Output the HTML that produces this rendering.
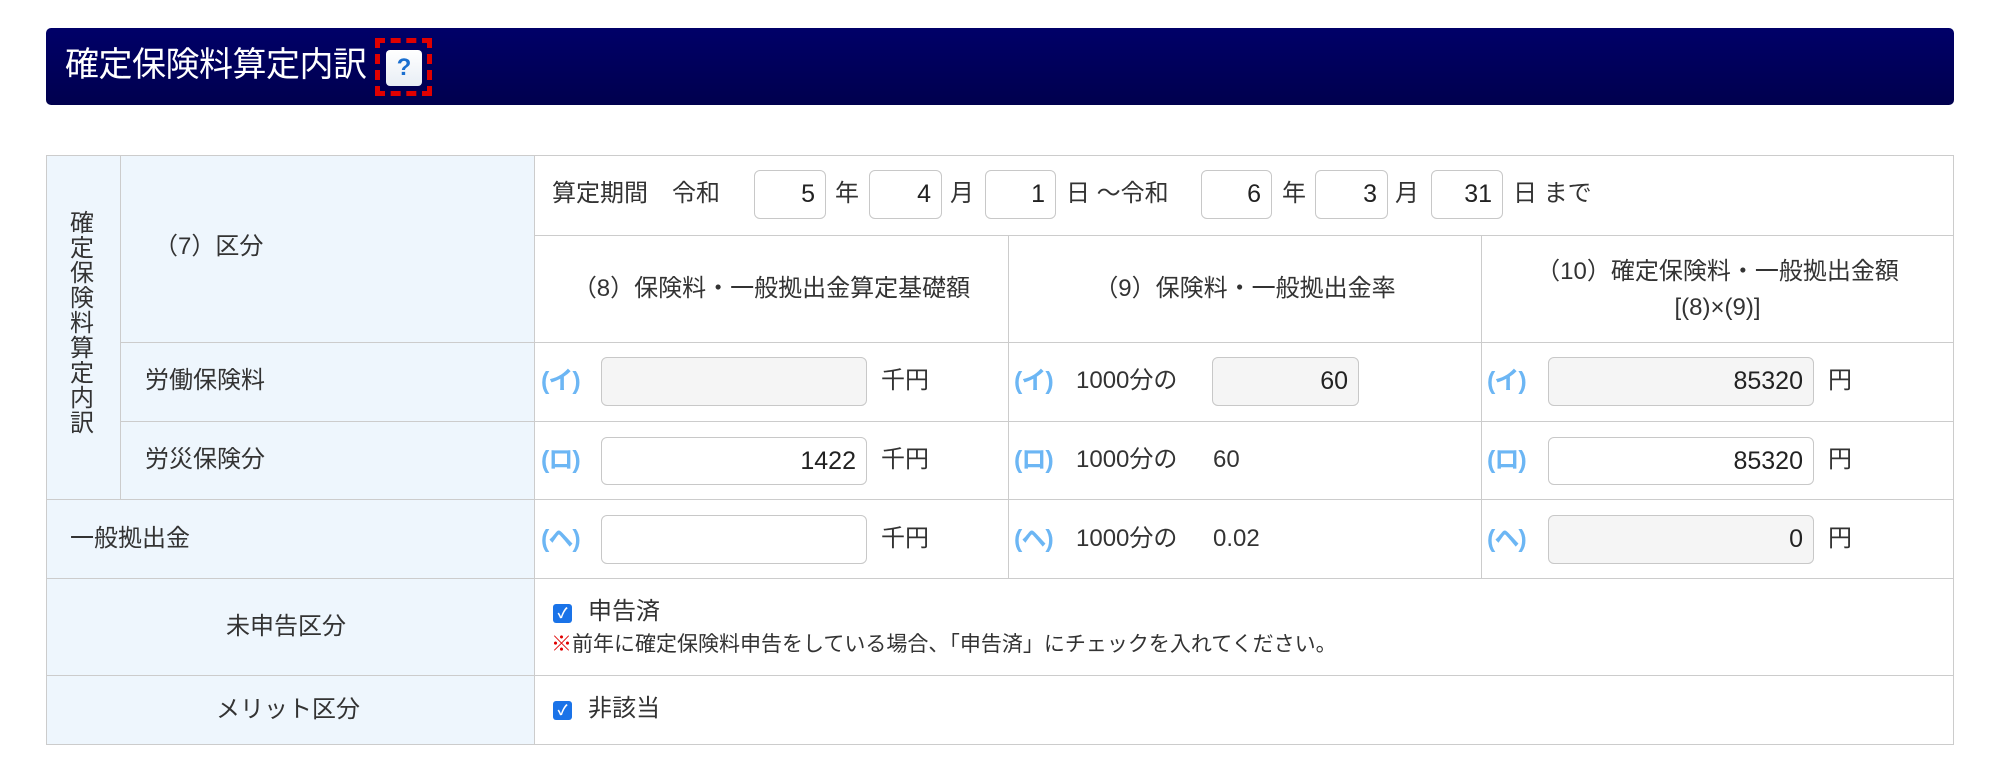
<!DOCTYPE html>
<html><head><meta charset="utf-8"><style>
*{box-sizing:border-box;margin:0;padding:0}
body{width:2000px;height:776px;background:#fff;font-family:"Liberation Sans","Noto Sans CJK JP",sans-serif;color:#333;position:relative;overflow:hidden;font-size:24px}
.a{position:absolute;white-space:nowrap;line-height:28px}
.hd{left:46px;top:28px;width:1908px;height:77px;border-radius:5px;background:linear-gradient(#000068,#00004e)}
.hd .t{position:absolute;left:19px;top:17px;color:#fff;font-size:34px;line-height:40px;letter-spacing:-0.5px}
.q{left:375px;top:38px;width:57px;height:58px;border:5px dashed #e00000}
.qi{left:386px;top:50px;width:36px;height:36px;background:linear-gradient(#fff,#e8eef5);border-radius:4px;color:#1a6fd0;font-weight:bold;font-size:24px;text-align:center;line-height:36px}
.c{position:absolute;border:1px solid #ccc}
.lb{background:#eef6fd}
.in{position:absolute;border:1px solid #c8c8c8;border-radius:6px;background:#fff;text-align:right;padding-right:10px;font-size:25px;line-height:47px;color:#222}
.g{background:#f5f5f5}
.m{position:absolute;color:#6cb6f4;font-size:25px;line-height:28px;font-weight:bold;letter-spacing:-1px}
.cb{position:absolute;width:19px;height:19px;background:#1a73e8;border-radius:3px;color:#fff;font-size:14px;line-height:19px;text-align:center;font-weight:bold}
</style></head><body>
<div class="a hd"><div class="t">確定保険料算定内訳</div></div>
<div class="a q"></div><div class="a qi">?</div>

<div class="c lb" style="left:46px;top:155px;width:75px;height:345px"></div>
<div class="c lb" style="left:120px;top:155px;width:415px;height:188px"></div>
<div class="c lb" style="left:120px;top:342px;width:415px;height:80px"></div>
<div class="c lb" style="left:120px;top:421px;width:415px;height:79px"></div>
<div class="c lb" style="left:46px;top:499px;width:489px;height:80px"></div>
<div class="c lb" style="left:46px;top:578px;width:489px;height:98px"></div>
<div class="c lb" style="left:46px;top:675px;width:489px;height:70px"></div>
<div class="c" style="left:534px;top:155px;width:1420px;height:81px"></div>
<div class="c" style="left:534px;top:235px;width:475px;height:108px"></div>
<div class="c" style="left:1008px;top:235px;width:474px;height:108px"></div>
<div class="c" style="left:1481px;top:235px;width:473px;height:108px"></div>
<div class="c" style="left:534px;top:342px;width:475px;height:80px"></div>
<div class="c" style="left:1008px;top:342px;width:474px;height:80px"></div>
<div class="c" style="left:1481px;top:342px;width:473px;height:80px"></div>
<div class="c" style="left:534px;top:421px;width:475px;height:79px"></div>
<div class="c" style="left:1008px;top:421px;width:474px;height:79px"></div>
<div class="c" style="left:1481px;top:421px;width:473px;height:79px"></div>
<div class="c" style="left:534px;top:499px;width:475px;height:80px"></div>
<div class="c" style="left:1008px;top:499px;width:474px;height:80px"></div>
<div class="c" style="left:1481px;top:499px;width:473px;height:80px"></div>
<div class="c" style="left:534px;top:578px;width:1420px;height:98px"></div>
<div class="c" style="left:534px;top:675px;width:1420px;height:70px"></div>

<div class="a" style="left:70px;top:211px;width:26px;font-size:24px;line-height:25px;white-space:normal">確定保険料算定内訳</div>
<div class="a" style="left:154px;top:233px">（7）区分</div>
<div class="a" style="left:145px;top:367px">労働保険料</div>
<div class="a" style="left:145px;top:446px">労災保険分</div>
<div class="a" style="left:70px;top:525px">一般拠出金</div>
<div class="a" style="left:226px;top:613px">未申告区分</div>
<div class="a" style="left:216px;top:696px">メリット区分</div>

<div class="a" style="left:552px;top:180px">算定期間　令和</div>
<div class="in" style="left:754px;top:170px;width:72px;height:49px">5</div>
<div class="a" style="left:835px;top:180px">年</div>
<div class="in" style="left:869px;top:170px;width:73px;height:49px">4</div>
<div class="a" style="left:950px;top:180px">月</div>
<div class="in" style="left:985px;top:170px;width:71px;height:49px">1</div>
<div class="a" style="left:1066px;top:180px">日 ～令和</div>
<div class="in" style="left:1201px;top:170px;width:71px;height:49px">6</div>
<div class="a" style="left:1282px;top:180px">年</div>
<div class="in" style="left:1315px;top:170px;width:73px;height:49px">3</div>
<div class="a" style="left:1395px;top:180px">月</div>
<div class="in" style="left:1431px;top:170px;width:72px;height:49px">31</div>
<div class="a" style="left:1513px;top:180px">日 まで</div>

<div class="a" style="left:534px;top:275px;width:475px;text-align:center">（8）保険料・一般拠出金算定基礎額</div>
<div class="a" style="left:1008px;top:275px;width:474px;text-align:center">（9）保険料・一般拠出金率</div>
<div class="a" style="left:1481px;top:254px;width:473px;text-align:center;line-height:36px">（10）確定保険料・一般拠出金額<br>[(8)×(9)]</div>

<div class="m" style="left:541px;top:367px">(イ)</div>
<div class="in g" style="left:601px;top:357px;width:266px;height:49px"></div>
<div class="a" style="left:881px;top:367px">千円</div>
<div class="m" style="left:1014px;top:367px">(イ)</div>
<div class="a" style="left:1076px;top:367px">1000分の</div>
<div class="in g" style="left:1212px;top:357px;width:147px;height:49px">60</div>
<div class="m" style="left:1487px;top:367px">(イ)</div>
<div class="in g" style="left:1548px;top:357px;width:266px;height:49px">85320</div>
<div class="a" style="left:1828px;top:367px">円</div>

<div class="m" style="left:541px;top:446px">(ロ)</div>
<div class="in" style="left:601px;top:437px;width:266px;height:48px">1422</div>
<div class="a" style="left:881px;top:446px">千円</div>
<div class="m" style="left:1014px;top:446px">(ロ)</div>
<div class="a" style="left:1076px;top:446px">1000分の</div>
<div class="a" style="left:1213px;top:446px">60</div>
<div class="m" style="left:1487px;top:446px">(ロ)</div>
<div class="in" style="left:1548px;top:437px;width:266px;height:48px">85320</div>
<div class="a" style="left:1828px;top:446px">円</div>

<div class="m" style="left:541px;top:525px">(ヘ)</div>
<div class="in" style="left:601px;top:515px;width:266px;height:49px"></div>
<div class="a" style="left:881px;top:525px">千円</div>
<div class="m" style="left:1014px;top:525px">(ヘ)</div>
<div class="a" style="left:1076px;top:525px">1000分の</div>
<div class="a" style="left:1213px;top:525px">0.02</div>
<div class="m" style="left:1487px;top:525px">(ヘ)</div>
<div class="in g" style="left:1548px;top:515px;width:266px;height:49px">0</div>
<div class="a" style="left:1828px;top:525px">円</div>

<div class="cb" style="left:553px;top:604px">✓</div>
<div class="a" style="left:588px;top:598px">申告済</div>
<div class="a" style="left:551px;top:631px;font-size:21px"><span style="color:#e00000">※</span>前年に確定保険料申告をしている場合、「申告済」にチェックを入れてください。</div>
<div class="cb" style="left:553px;top:701px">✓</div>
<div class="a" style="left:588px;top:695px">非該当</div>
</body></html>
